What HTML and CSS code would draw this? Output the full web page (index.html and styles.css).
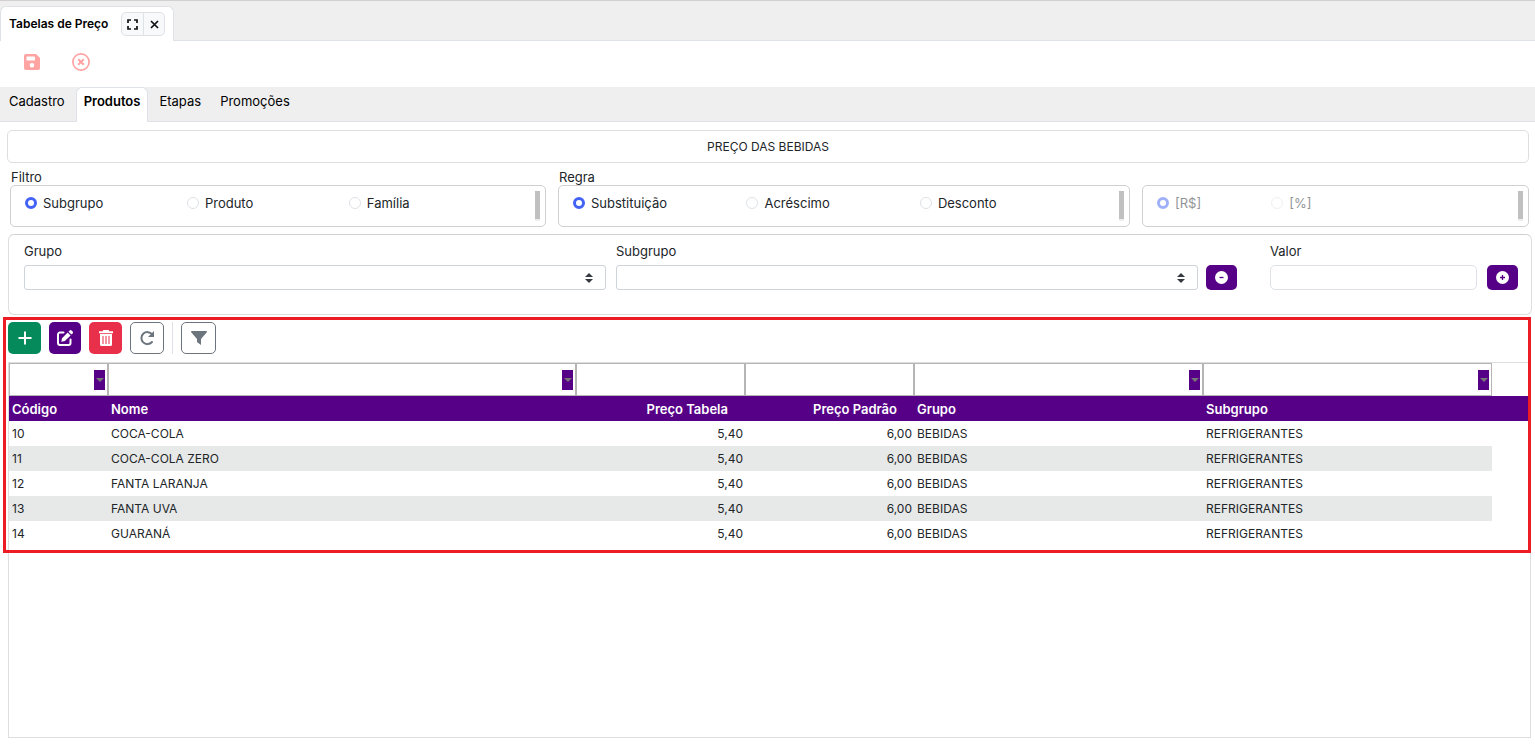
FILE: index.html
```html
<!DOCTYPE html>
<html lang="pt-BR">
<head>
    <meta charset="UTF-8">
    <meta name="viewport" content="width=device-width, initial-scale=1.0">
    <title>Tabelas de Preço</title>
    <link rel="stylesheet" href="styles.css">
</head>
<body>
    <header class="window-bar">
        <div class="window-tab">
            <span class="window-title">Tabelas de Preço</span>
            <div class="window-buttons">
                <button type="button" aria-label="Tela cheia">
                    <svg width="11" height="11" viewBox="0 0 11 11" fill="none" stroke="#111" stroke-width="1.700"><path d="M1 4V1h3M7 1h3v3M10 7v3H7M4 10H1V7"/></svg>
                </button>
                <button type="button" aria-label="Fechar">
                    <svg width="9" height="9" viewBox="0 0 9 9" fill="none" stroke="#111" stroke-width="1.700"><path d="M1 1l7 7M8 1L1 8"/></svg>
                </button>
            </div>
        </div>
    </header>

    <div class="actions">
        <button type="button" aria-label="Salvar" disabled>
            <svg width="16" height="16" viewBox="0 0 16 16"><path fill="#ffa3a3" fill-rule="evenodd" d="M2 0h10l4 4v10a2 2 0 0 1-2 2H2a2 2 0 0 1-2-2V2a2 2 0 0 1 2-2zM3 2.500a.5.5 0 0 0-.5.5v3c0 .3.200.5.5.5h7.500c.3 0 .5-.2.5-.5V3a.5.5 0 0 0-.5-.5zM8 9a2.300 2.300 0 1 0 0 4.600A2.300 2.300 0 0 0 8 9z"/></svg>
        </button>
        <button type="button" aria-label="Cancelar" disabled>
            <svg width="18" height="18" viewBox="0 0 18 18" fill="none" stroke="#ffa3a3"><circle cx="9" cy="9" r="8.100" stroke-width="1.700"/><path stroke-width="2" d="M6.200 6.200l5.600 5.600M11.800 6.200l-5.600 5.600"/></svg>
        </button>
    </div>

    <nav class="tabs">
        <a href="#cadastro">Cadastro</a>
        <a href="#produtos" class="active">Produtos</a>
        <a href="#etapas">Etapas</a>
        <a href="#promocoes">Promoções</a>
    </nav>

    <main>
        <h1 class="price-title">PREÇO DAS BEBIDAS</h1>

        <div class="rules">
            <fieldset>
                <legend>Filtro</legend>
                <div class="options">
                    <label><input type="radio" name="filtro" checked>Subgrupo</label>
                    <label><input type="radio" name="filtro">Produto</label>
                    <label><input type="radio" name="filtro">Família</label>
                    <span class="scroll"></span>
                </div>
            </fieldset>
            <fieldset>
                <legend>Regra</legend>
                <div class="options">
                    <label><input type="radio" name="regra" checked>Substituição</label>
                    <label><input type="radio" name="regra">Acréscimo</label>
                    <label><input type="radio" name="regra">Desconto</label>
                    <span class="scroll"></span>
                </div>
            </fieldset>
            <fieldset aria-label="Tipo de valor">
                <div class="options">
                    <label class="off"><input type="radio" name="tipo" checked disabled>[R$]</label>
                    <label class="off"><input type="radio" name="tipo" disabled>[%]</label>
                    <span class="scroll"></span>
                </div>
            </fieldset>
        </div>

        <form class="filters">
            <div class="field">
                <label for="grupo">Grupo</label>
                <div class="select-box">
                    <select id="grupo"><option></option></select>
                    <svg width="8" height="10" viewBox="0 0 8 10" fill="#343a40"><path d="M4 0l4 4H0zM0 6h8l-4 4z"/></svg>
                </div>
            </div>
            <div class="field subgroup">
                <label for="subgrupo">Subgrupo</label>
                <div class="select-box">
                    <select id="subgrupo"><option></option></select>
                    <svg width="8" height="10" viewBox="0 0 8 10" fill="#343a40"><path d="M4 0l4 4H0zM0 6h8l-4 4z"/></svg>
                </div>
            </div>
            <button type="button" class="round-btn minus" aria-label="Remover">
                <svg width="13" height="13" viewBox="0 0 13 13"><circle cx="6.500" cy="6.500" r="6.500" fill="#fff"/><path d="M4.500 6.500h4" stroke="#560087" stroke-width="1.300"/></svg>
            </button>
            <div class="field value">
                <label for="valor">Valor</label>
                <input type="text" id="valor">
            </div>
            <button type="button" class="round-btn" aria-label="Adicionar">
                <svg width="13" height="13" viewBox="0 0 13 13"><circle cx="6.500" cy="6.500" r="6.500" fill="#fff"/><path d="M4 6.500h5M6.500 4v5" stroke="#560087" stroke-width="1.300"/></svg>
            </button>
        </form>

        <section class="products">
            <div class="toolbar">
                <button type="button" class="add" aria-label="Incluir">
                    <svg width="14" height="14" viewBox="0 0 14 14" stroke="#fff" stroke-width="2"><path d="M7 0.500v13M0.500 7h13"/></svg>
                </button>
                <button type="button" class="edit" aria-label="Editar">
                    <svg width="16" height="16" viewBox="0 0 16 16"><path fill="none" stroke="#fff" stroke-width="2" stroke-linecap="round" d="M6.500 2.500H3a2 2 0 0 0-2 2V13a2 2 0 0 0 2 2h8.500a2 2 0 0 0 2-2V9.500"/><path fill="#fff" d="M5 8.200l5.700-5.700 2.900 2.900L7.900 11.100 4.300 11.800zM11.500 1.700l1.200-1.200a1.300 1.300 0 0 1 1.900 0l1 1a1.300 1.300 0 0 1 0 1.900l-1.200 1.200z"/></svg>
                </button>
                <button type="button" class="delete" aria-label="Excluir">
                    <svg width="14" height="16" viewBox="0 0 14 16"><path fill="#fff" d="M4.300 0h5.400l.7 1.200H14v2H0v-2h3.600z"/><path fill="#fff" fill-rule="evenodd" d="M1 4h12v10.500a1.500 1.500 0 0 1-1.500 1.500h-9A1.500 1.500 0 0 1 1 14.500zM3.500 6v8h1V6zM6.500 6v8h1V6zM9.500 6v8h1V6z"/></svg>
                </button>
                <button type="button" class="outline refresh" aria-label="Atualizar">
                    <svg width="16" height="16" viewBox="0 0 16 16"><path fill="none" stroke="#6c757d" stroke-width="2" stroke-linecap="round" d="M13 12a6 6 0 1 1 .2-7.500"/><path fill="#6c757d" d="M15 1v6H9z"/></svg>
                </button>
                <span class="divider"></span>
                <button type="button" class="outline" aria-label="Filtrar">
                    <svg width="16" height="14" viewBox="0 0 16 14"><path fill="#6c757d" d="M.8 0h14.400c.8 0 1 .8.600 1.300L10 8v6l-4-3V8L.2 1.300C-.2.800 0 0 .8 0z"/></svg>
                </button>
            </div>

            <div class="grid-box">
                <table>
                    <colgroup>
                        <col class="col-code">
                        <col>
                        <col class="col-price">
                        <col class="col-price">
                        <col class="col-group">
                        <col class="col-group">
                        <col class="col-end">
                    </colgroup>
                    <thead>
                        <tr class="filter-row">
                            <td><div><input type="text" aria-label="Filtrar código"><button type="button" aria-label="Opções de código"></button></div></td>
                            <td><div><input type="text" aria-label="Filtrar nome"><button type="button" aria-label="Opções de nome"></button></div></td>
                            <td><div><input type="text" aria-label="Filtrar preço tabela"></div></td>
                            <td><div><input type="text" aria-label="Filtrar preço padrão"></div></td>
                            <td><div><input type="text" aria-label="Filtrar grupo"><button type="button" aria-label="Opções de grupo"></button></div></td>
                            <td><div><input type="text" aria-label="Filtrar subgrupo"><button type="button" aria-label="Opções de subgrupo"></button></div></td>
                            <td class="end"></td>
                        </tr>
                        <tr>
                            <th>Código</th>
                            <th>Nome</th>
                            <th class="num">Preço Tabela</th>
                            <th class="num">Preço Padrão</th>
                            <th>Grupo</th>
                            <th>Subgrupo</th>
                            <th></th>
                        </tr>
                    </thead>
                    <tbody>
                        <tr><td>10</td><td>COCA-COLA</td><td class="num">5,40</td><td class="num">6,00</td><td>BEBIDAS</td><td>REFRIGERANTES</td><td class="end"></td></tr>
                        <tr><td>11</td><td>COCA-COLA ZERO</td><td class="num">5,40</td><td class="num">6,00</td><td>BEBIDAS</td><td>REFRIGERANTES</td><td class="end"></td></tr>
                        <tr><td>12</td><td>FANTA LARANJA</td><td class="num">5,40</td><td class="num">6,00</td><td>BEBIDAS</td><td>REFRIGERANTES</td><td class="end"></td></tr>
                        <tr><td>13</td><td>FANTA UVA</td><td class="num">5,40</td><td class="num">6,00</td><td>BEBIDAS</td><td>REFRIGERANTES</td><td class="end"></td></tr>
                        <tr><td>14</td><td>GUARANÁ</td><td class="num">5,40</td><td class="num">6,00</td><td>BEBIDAS</td><td>REFRIGERANTES</td><td class="end"></td></tr>
                    </tbody>
                </table>
            </div>
            <div class="highlight"></div>
        </section>
    </main>
</body>
</html>
```

FILE: styles.css
```css
* {
    margin: 0;
    padding: 0;
    box-sizing: border-box;
}

body {
    font-family: 'Inter', 'Liberation Sans', sans-serif;
    font-size: 13px;
    line-height: 16px;
    color: #212529;
    background-color: #fff;
    display: flex;
    flex-direction: column;
    min-height: 100vh;
}

button,
input,
select {
    font: inherit;
    color: inherit;
}

button {
    display: flex;
    align-items: center;
    justify-content: center;
    border: none;
    background: none;
    cursor: pointer;
}

/* Aba da janela */
.window-bar {
    display: flex;
    align-items: flex-end;
    height: 41px;
    background-color: #efefef;
    border-top: 1px solid #d0d0d0;
    border-bottom: 1px solid #dee2e6;
}

.window-tab {
    display: flex;
    align-items: center;
    gap: 13px;
    height: 35px;
    padding: 0 8px;
    margin-bottom: -1px;
    background-color: #fff;
    border: 1px solid #dee2e6;
    border-bottom: none;
    border-radius: 6px 6px 0 0;
}

.window-title {
    font-size: 12px;
    font-weight: 600;
    color: #000;
}

.window-buttons {
    display: flex;
    height: 24px;
    border: 1px solid #dee2e6;
    border-radius: 5px;
    background-color: #f8f9fa;
}

.window-buttons button {
    width: 21px;
}

.window-buttons button + button {
    border-left: 1px solid #dee2e6;
}

.actions {
    display: flex;
    align-items: center;
    gap: 32px;
    height: 46px;
    padding: 0 24px 4px;
}

/* Abas internas */
.tabs {
    display: flex;
    gap: 3px;
    height: 35px;
    padding-left: 1px;
    background-color: #efefef;
    border-bottom: 1px solid #dee2e6;
}

.tabs a {
    height: 35px;
    padding: 5px 7px;
    border: 1px solid transparent;
    border-bottom: none;
    border-radius: 6px 6px 0 0;
    color: #000;
    text-decoration: none;
}

.tabs .active {
    font-weight: 600;
    background-color: #fff;
    border-color: #dee2e6;
}

main {
    display: flex;
    flex-direction: column;
    flex: 1;
    padding: 8px 3px 14px 7px;
}

.price-title {
    margin-right: 3px;
    padding: 8px 8px 7px;
    border: 1px solid #dedede;
    border-radius: 5px;
    font-size: 12px;
    font-weight: 400;
    text-align: center;
}

.rules {
    display: grid;
    grid-template-columns: 536fr 572fr 387fr;
    align-items: end;
    gap: 12px;
    margin: 6px 3px 7px 3px;
}

fieldset {
    border: none;
    min-width: 0;
}

legend {
    padding: 0 1px;
}

.options {
    position: relative;
    display: grid;
    grid-template-columns: repeat(3, 32%);
    height: 42px;
    padding: 8px 14px;
    border: 1px solid #d0d0d0;
    border-radius: 5px;
}

.options label {
    display: flex;
    align-items: center;
    gap: 6px;
    height: 18px;
}

.options .off {
    opacity: 0.5;
}

.options input {
    appearance: none;
    width: 12px;
    height: 12px;
    border: 1px solid #dee2e6;
    border-radius: 50%;
}

.options input:checked {
    border: 3px solid #4263f5;
}

.scroll {
    position: absolute;
    top: 5px;
    right: 5px;
    width: 5px;
    height: 30px;
    background-color: #c0c0c0;
    border-bottom: 2px solid #eee;
}

/* Grupo, subgrupo e valor */
.filters {
    display: flex;
    align-items: flex-start;
    height: 81px;
    margin-left: 1px;
    padding: 8px 13px 0 15px;
    border: 1px solid #dedede;
    border-top-color: #d0d0d0;
    border-radius: 6px;
}

.field {
    flex: 1;
    display: flex;
    flex-direction: column;
    gap: 5px;
}

.field > label {
    height: 17px;
}

.subgroup {
    margin-left: 10px;
}

.value {
    flex: 0 0 207px;
    margin: 0 10px 0 33px;
}

.select-box {
    display: grid;
    align-items: center;
}

.select-box select,
.select-box svg {
    grid-area: 1 / 1;
}

.select-box svg {
    justify-self: end;
    margin-right: 13px;
    pointer-events: none;
}

.select-box select {
    appearance: none;
    width: 100%;
    height: 25px;
    background-color: #fff;
    border: 1px solid #ced4da;
    border-radius: 3px;
}

.value input {
    width: 100%;
    height: 25px;
    padding: 0 6px;
    border: 1px solid #dee2e6;
    border-radius: 5px;
}

.round-btn {
    flex: none;
    width: 31px;
    height: 25px;
    margin-top: 22px;
    background-color: #560087;
    border-radius: 5px;
}

.minus {
    margin-left: 8px;
}

/* Grade de produtos */
.products {
    position: relative;
    display: flex;
    flex-direction: column;
    flex: 1;
    margin-left: 1px;
    padding: 7px 1px 0 0;
}

.highlight {
    position: absolute;
    top: 2px;
    left: -5px;
    right: 1px;
    height: 236px;
    border: 3px solid #ed1c24;
    pointer-events: none;
}

.toolbar {
    display: flex;
    align-items: center;
    gap: 8px;
    height: 32px;
    margin-bottom: 8px;
}

.toolbar button {
    width: 33px;
    height: 32px;
    border-radius: 5px;
}

.toolbar .add {
    background-color: #048a5b;
}

.toolbar .edit {
    width: 32px;
    background-color: #560087;
}

.toolbar .delete {
    background-color: #e9304b;
}

.toolbar .outline {
    width: 35px;
    border: 1px solid #6c757d;
}

.toolbar .refresh {
    width: 34px;
}

.divider {
    width: 1px;
    height: 32px;
    background-color: #dee2e6;
}

.grid-box {
    flex: 1;
    border: 1px solid #dedede;
}

table {
    width: 100%;
    table-layout: fixed;
    border-collapse: collapse;
    font-size: 12px;
}

.col-code {
    width: 99px;
}

.col-price {
    width: 169px;
}

.col-group {
    width: 289px;
}

.col-end {
    width: 38px;
}

td,
th {
    height: 25px;
    padding: 0 2px 0 3px;
    text-align: left;
}

th {
    font-size: 13px;
    font-weight: 600;
    color: #fff;
    background-color: #560087;
}

.num {
    text-align: right;
}

th.num {
    padding-right: 17px;
}

tbody tr:nth-child(even) td {
    background-color: #e7e9e8;
}

tbody tr:nth-child(even) .end {
    background-color: #fff;
}

.filter-row td {
    height: 33px;
    padding: 0;
}

.filter-row div {
    display: flex;
    align-items: center;
    height: 33px;
    padding-right: 2px;
    border: 1px solid #b5b5b5;
}

.filter-row input {
    flex: 1;
    min-width: 0;
    height: 100%;
    border: none;
    outline: none;
}

.filter-row button {
    width: 11px;
    height: 20px;
    background-color: #560087;
}

.filter-row button::before {
    content: "";
    border: 4px solid transparent;
    border-top-color: #777;
    border-bottom: none;
}
```
